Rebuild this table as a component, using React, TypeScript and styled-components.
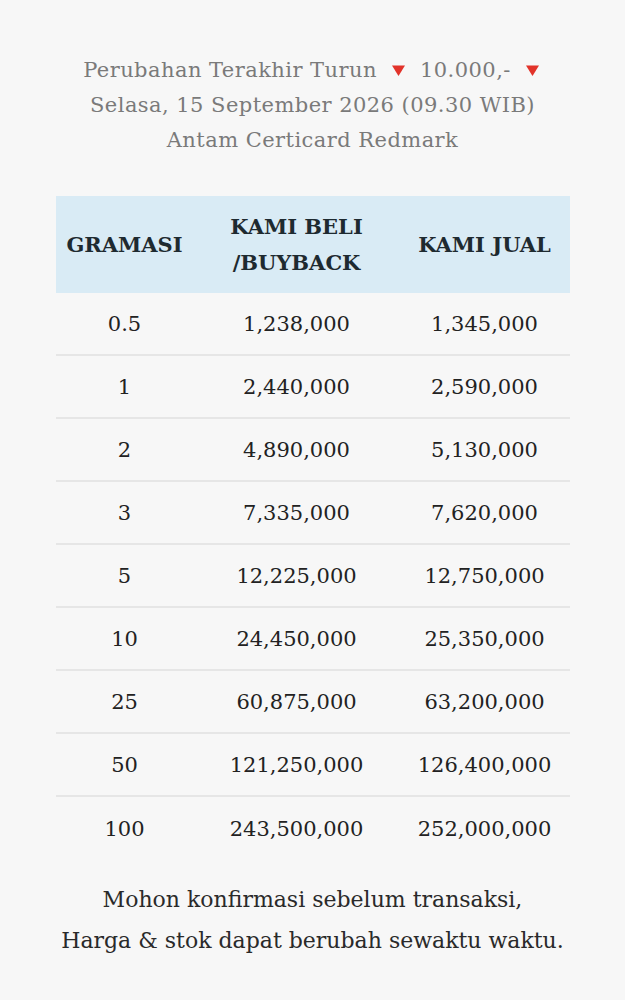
import React from "react";
import styled, { createGlobalStyle } from "styled-components";

const Global = createGlobalStyle`
  html, body { margin: 0; padding: 0; background: #f7f7f7; }
  body { font-family: "DejaVu Serif", serif; }
`;

const Page = styled.div`
  width: 625px;
  min-height: 1000px;
  background: #f7f7f7;
  display: flex;
  flex-direction: column;
  align-items: center;
  padding-top: 53px;
  box-sizing: border-box;
`;

const Info = styled.div`
  display: flex;
  flex-direction: column;
  align-items: center;
  color: #7a7a7a;
  font-family: "DejaVu Serif", serif;
  font-size: 21px;
  letter-spacing: 0.45px;
  line-height: 35px;
  text-align: center;
`;

const Line = styled.div`
  display: flex;
  align-items: center;
  gap: 12px;
  white-space: nowrap;
`;

const Tri = styled.svg`
  width: 15px;
  height: 13px;
  margin: 0 2px;
`;

const Table = styled.div`
  margin-top: 38px;
  width: 514px;
  display: flex;
  flex-direction: column;
`;

const HeadRow = styled.div`
  display: grid;
  grid-template-columns: 138px 206px 170px;
  height: 97px;
  align-items: center;
  background: #d9ebf5;
  font-family: "DejaVu Serif", serif;
  font-weight: bold;
  font-size: 21px;
  line-height: 36px;
  color: #1e2a30;
`;

const HeadCell = styled.div`
  text-align: center;
  white-space: nowrap;
`;

const Row = styled.div`
  display: grid;
  grid-template-columns: 138px 206px 170px;
  height: 63px;
  align-items: center;
  border-bottom: 2px solid #e6e6e6;
  box-sizing: border-box;
  font-family: "DejaVu Serif", serif;
  font-size: 21px;
  color: #222;
  &:last-child { border-bottom: none; }
`;

const Cell = styled.div`
  text-align: center;
  white-space: nowrap;
`;

const Footer = styled.div`
  margin-top: 19px;
  color: #2a2a2a;
  font-family: "DejaVu Serif", serif;
  font-size: 22px;
  line-height: 41px;
  text-align: center;
  white-space: nowrap;
`;

const rows: [string, string, string][] = [
  ["0.5", "1,238,000", "1,345,000"],
  ["1", "2,440,000", "2,590,000"],
  ["2", "4,890,000", "5,130,000"],
  ["3", "7,335,000", "7,620,000"],
  ["5", "12,225,000", "12,750,000"],
  ["10", "24,450,000", "25,350,000"],
  ["25", "60,875,000", "63,200,000"],
  ["50", "121,250,000", "126,400,000"],
  ["100", "243,500,000", "252,000,000"],
];

const Down = () => (
  <Tri viewBox="0 0 15 13">
    <path d="M1 1.5 H14 L7.5 12 Z" fill="#e2332a" />
  </Tri>
);

export default function App() {
  return (
    <Page>
      <Global />
      <Info>
        <Line>
          Perubahan Terakhir Turun <Down /> 10.000,- <Down />
        </Line>
        <Line>Selasa, 15 September 2026 (09.30 WIB)</Line>
        <Line>Antam Certicard Redmark</Line>
      </Info>
      <Table>
        <HeadRow>
          <HeadCell>GRAMASI</HeadCell>
          <HeadCell>
            KAMI BELI
            <br />
            /BUYBACK
          </HeadCell>
          <HeadCell>KAMI JUAL</HeadCell>
        </HeadRow>
        {rows.map((r) => (
          <Row key={r[0]}>
            <Cell>{r[0]}</Cell>
            <Cell>{r[1]}</Cell>
            <Cell>{r[2]}</Cell>
          </Row>
        ))}
      </Table>
      <Footer>
        Mohon konfirmasi sebelum transaksi,
        <br />
        Harga &amp; stok dapat berubah sewaktu waktu.
      </Footer>
    </Page>
  );
}
